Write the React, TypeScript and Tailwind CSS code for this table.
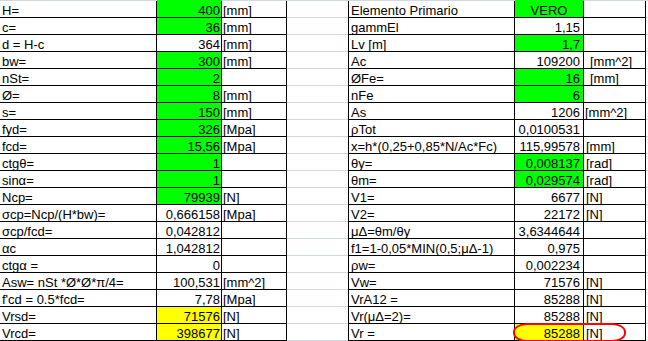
import React from "react";

type Fill = "" | "g" | "y";
type Row = { a: string; b: string; c: string; bf: Fill; d: string; e: string; f: string; ef: Fill; ec?: boolean; fpl?: number };

const rows: Row[] = [
  { a: "H=", b: "400", c: "[mm]", bf: "g", d: "Elemento Primario", e: "VERO", f: "", ef: "g", ec: true },
  { a: "c=", b: "36", c: "[mm]", bf: "g", d: "gammEl", e: "1,15", f: "", ef: "" },
  { a: "d = H-c", b: "364", c: "[mm]", bf: "", d: "Lv [m]", e: "1,7", f: "", ef: "g" },
  { a: "bw=", b: "300", c: "[mm]", bf: "g", d: "Ac", e: "109200", f: "[mm^2]", ef: "", fpl: 6 },
  { a: "nSt=", b: "2", c: "", bf: "g", d: "ØFe=", e: "16", f: "[mm]", ef: "g", fpl: 6 },
  { a: "Ø=", b: "8", c: "[mm]", bf: "g", d: "nFe", e: "6", f: "", ef: "g" },
  { a: "s=", b: "150", c: "[mm]", bf: "g", d: "As", e: "1206", f: "[mm^2]", ef: "", fpl: 1 },
  { a: "fyd=", b: "326", c: "[Mpa]", bf: "g", d: "ρTot", e: "0,0100531", f: "", ef: "" },
  { a: "fcd=", b: "15,56", c: "[Mpa]", bf: "g", d: "x=h*(0,25+0,85*N/Ac*Fc)", e: "115,99578", f: "[mm]", ef: "" },
  { a: "ctgθ=", b: "1", c: "", bf: "g", d: "θy=", e: "0,008137", f: "[rad]", ef: "g" },
  { a: "sinα=", b: "1", c: "", bf: "g", d: "θm=", e: "0,029574", f: "[rad]", ef: "g" },
  { a: "Ncp=", b: "79939", c: "[N]", bf: "g", d: "V1=", e: "6677", f: "[N]", ef: "" },
  { a: "σcp=Ncp/(H*bw)=", b: "0,666158", c: "[Mpa]", bf: "", d: "V2=", e: "22172", f: "[N]", ef: "" },
  { a: "σcp/fcd=", b: "0,042812", c: "", bf: "", d: "μΔ=θm/θy", e: "3,6344644", f: "", ef: "" },
  { a: "αc", b: "1,042812", c: "", bf: "", d: "f1=1-0,05*MIN(0,5;μΔ-1)", e: "0,975", f: "", ef: "" },
  { a: "ctgα =", b: "0", c: "", bf: "", d: "ρw=", e: "0,002234", f: "", ef: "" },
  { a: "Asw= nSt *Ø*Ø*π/4=", b: "100,531", c: "[mm^2]", bf: "", d: "Vw=", e: "71576", f: "[N]", ef: "" },
  { a: "f'cd = 0.5*fcd=", b: "7,78", c: "[Mpa]", bf: "", d: "VrA12 =", e: "85288", f: "[N]", ef: "" },
  { a: "Vrsd=", b: "71576", c: "[N]", bf: "y", d: "Vr(μΔ=2)=", e: "85288", f: "[N]", ef: "" },
  { a: "Vrcd=", b: "398677", c: "[N]", bf: "y", d: "Vr =", e: "85288", f: "[N]", ef: "y" },
];

const fillCls = (f: Fill) => (f === "g" ? "bg-[#00ff00]" : f === "y" ? "bg-[#ffff00]" : "bg-white");
const topCls = (f: Fill) => (f === "g" ? "bg-[#00ff00]" : f === "y" ? "bg-[#ffff00]" : "bg-[#d0d7e5]");

const txt = "h-[17px] border-b border-black pt-[2px] leading-[15px] whitespace-nowrap overflow-visible";

export default function App() {
  const first = rows[0];
  return (
    <div
      className="relative w-[648px] h-[341px] overflow-hidden bg-white text-[13px] text-black"
      style={{ fontFamily: '"Liberation Sans", Arial, sans-serif' }}
    >
      <div className="flex h-[1px]">
        <div className="w-[157px] bg-[#d0d7e5]" />
        <div className={`w-[65px] ${topCls(first.bf)}`} />
        <div className="w-[65px] bg-[#d0d7e5]" />
        <div className="w-[61px] bg-[#d0d7e5]" />
        <div className="w-[167px] bg-[#d0d7e5]" />
        <div className={`w-[69px] ${topCls(first.ef)}`} />
        <div className="w-[62px] bg-[#d0d7e5]" />
        <div className="w-[2px] bg-[#d0d7e5]" />
      </div>
      {rows.map((r, i) => (
        <div key={i} className="flex h-[17px]">
          <div className={`w-[157px] border-r pl-[2px] ${txt}`}>{r.a}</div>
          <div className={`w-[65px] border-r pr-[1px] text-right ${fillCls(r.bf)} ${txt}`}>{r.b}</div>
          <div className={`w-[65px] border-r pl-[1px] ${txt}`}>{r.c}</div>
          <div className="w-[61px] h-[17px] border-b border-[#d0d7e5]" />
          <div className={`w-[167px] border-l border-r pl-[2px] ${txt}`}>{r.d}</div>
          <div
            className={`w-[69px] border-r ${r.ec ? "text-center" : "text-right pr-[3px]"} ${fillCls(r.ef)} ${txt}`}
          >
            {r.e}
          </div>
          <div
            className={`w-[62px] border-r ${txt} ${
              r.fpl === 6 ? "pl-[6px]" : r.fpl === 1 ? "pl-[1px]" : "pl-[2px]"
            }`}
          >
            {r.f}
          </div>
          <div className="w-[2px] h-[17px] border-b border-[#d0d7e5]" />
        </div>
      ))}
      <div className="absolute left-[513px] top-[323px] w-[113px] h-[19px] border-2 border-[#ff0000] rounded-[14px/9px] pointer-events-none" />
    </div>
  );
}
